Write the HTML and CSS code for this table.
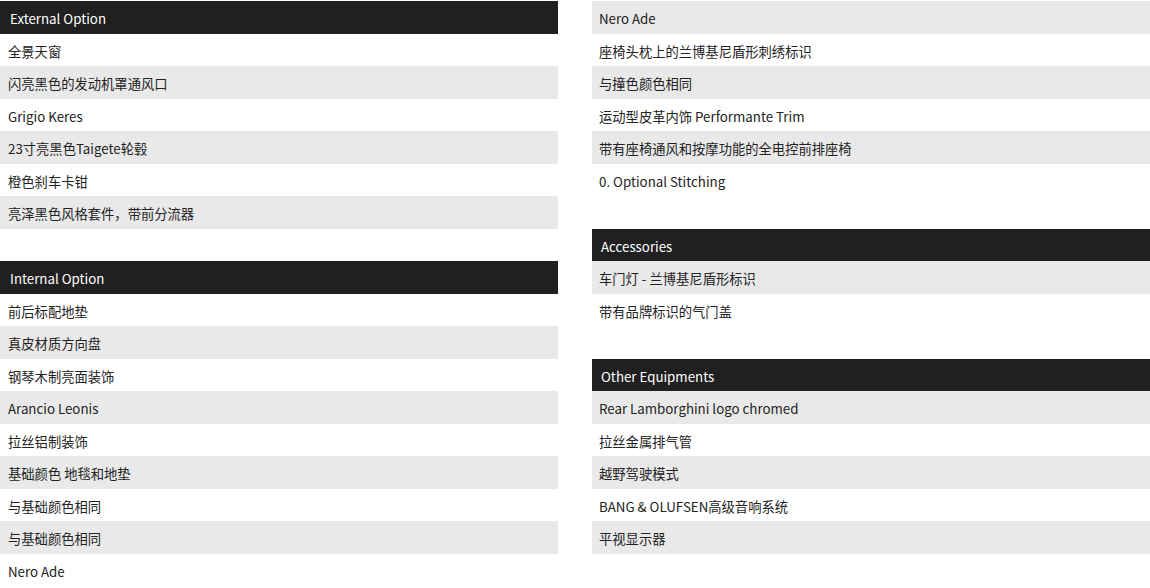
FILE: index.html
```html
<!DOCTYPE html>
<html lang="zh-CN">
<head>
<meta charset="utf-8">
<title>Options</title>
<link rel="stylesheet" href="styles.css">
</head>
<body>
<div class="page">
  <div class="col">
    <section class="group">
      <div class="head">External Option</div>
      <div class="row">全景天窗</div>
      <div class="row alt">闪亮黑色的发动机罩通风口</div>
      <div class="row">Grigio Keres</div>
      <div class="row alt">23寸亮黑色Taigete轮毂</div>
      <div class="row">橙色刹车卡钳</div>
      <div class="row alt">亮泽黑色风格套件，带前分流器</div>
    </section>
    <section class="group">
      <div class="head">Internal Option</div>
      <div class="row">前后标配地垫</div>
      <div class="row alt">真皮材质方向盘</div>
      <div class="row">钢琴木制亮面装饰</div>
      <div class="row alt">Arancio Leonis</div>
      <div class="row">拉丝铝制装饰</div>
      <div class="row alt">基础颜色 地毯和地垫</div>
      <div class="row">与基础颜色相同</div>
      <div class="row alt">与基础颜色相同</div>
      <div class="row">Nero Ade</div>
    </section>
  </div>
  <div class="col right">
    <section class="group">
      <div class="row alt">Nero Ade</div>
      <div class="row">座椅头枕上的兰博基尼盾形刺绣标识</div>
      <div class="row alt">与撞色颜色相同</div>
      <div class="row">运动型皮革内饰 Performante Trim</div>
      <div class="row alt">带有座椅通风和按摩功能的全电控前排座椅</div>
      <div class="row">0. Optional Stitching</div>
    </section>
    <section class="group">
      <div class="head">Accessories</div>
      <div class="row alt">车门灯 - 兰博基尼盾形标识</div>
      <div class="row">带有品牌标识的气门盖</div>
    </section>
    <section class="group">
      <div class="head">Other Equipments</div>
      <div class="row alt">Rear Lamborghini logo chromed</div>
      <div class="row">拉丝金属排气管</div>
      <div class="row alt">越野驾驶模式</div>
      <div class="row">BANG &amp; OLUFSEN高级音响系统</div>
      <div class="row alt">平视显示器</div>
    </section>
  </div>
</div>
</body>
</html>
```

FILE: styles.css
```css
html, body {
  margin: 0;
  padding: 0;
  background: #ffffff;
}
body {
  font-family: "Noto Sans CJK SC", "Noto Sans", sans-serif;
  font-size: 13.3px;
  color: #222222;
}
.page {
  display: flex;
  gap: 34px;
  padding-top: 1px;
}
.col {
  width: 558px;
  display: flex;
  flex-direction: column;
  gap: 32.5px;
}
.group {
  display: flex;
  flex-direction: column;
}
.head {
  height: 32.5px;
  padding-top: 3px;
  line-height: 29.5px;
  background: #202020;
  color: #ffffff;
  padding-left: 10px;
  box-sizing: border-box;
}
.row {
  height: 32.5px;
  padding-top: 3px;
  line-height: 29.5px;
  padding-left: 8px;
  box-sizing: border-box;
  white-space: nowrap;
}
.right .row {
  padding-left: 7px;
}
.right .head {
  padding-left: 9px;
}
.row.alt {
  background: #e9e9e9;
}
```
